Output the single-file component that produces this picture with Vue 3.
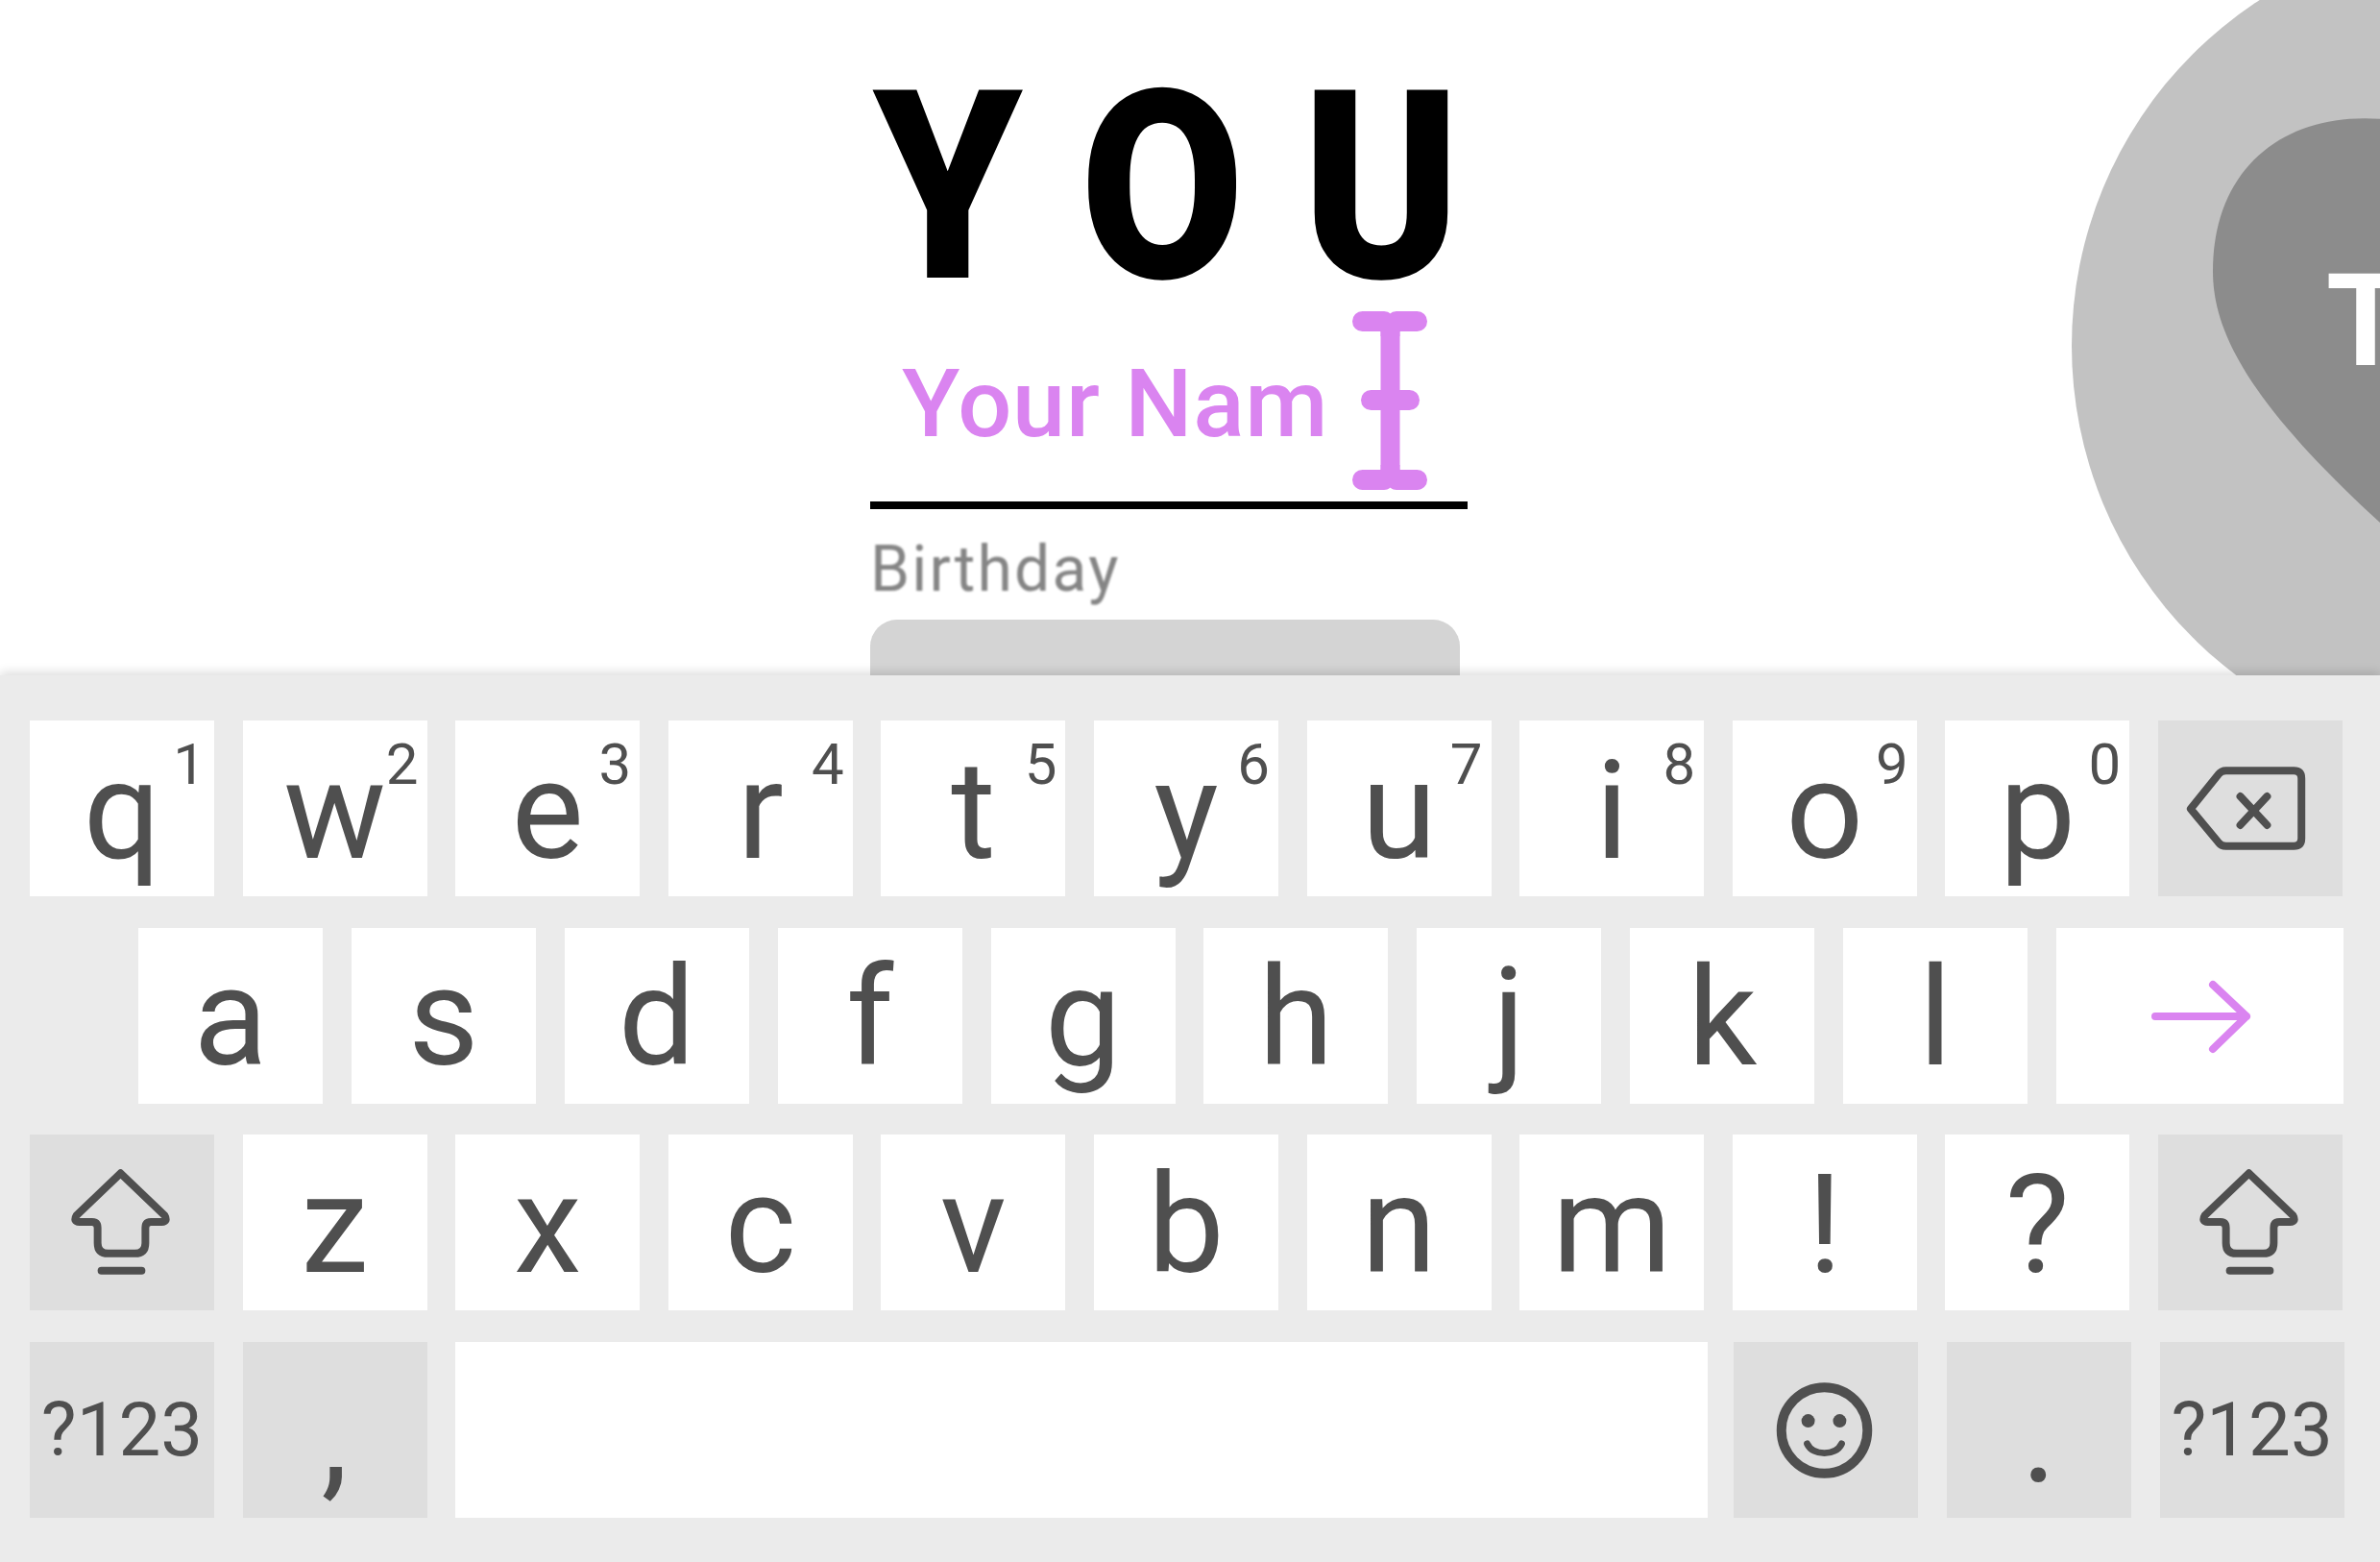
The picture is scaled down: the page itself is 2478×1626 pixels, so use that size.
<script setup>
const rowOne = [
  ['q', '1'], ['w', '2'], ['e', '3'], ['r', '4'], ['t', '5'],
  ['y', '6'], ['u', '7'], ['i', '8'], ['o', '9'], ['p', '0']
]
const rowTwo = ['a', 's', 'd', 'f', 'g', 'h', 'j', 'k', 'l']
const rowThree = ['z', 'x', 'c', 'v', 'b', 'n', 'm', '!', '?']
</script>

<template>
  <div class="screen">
    <section class="stage">
      <div class="badge">
        <svg class="badge-art" viewBox="2100 0 378 703" aria-hidden="true">
          <circle cx="2586" cy="360" r="429" fill="#c2c2c2" />
          <path d="M2490 125C2385 112 2304 170 2304 282C2304 345 2340 420 2490 555Z" fill="#8c8c8c" />
        </svg>
        <span class="badge-letter">T</span>
      </div>

      <div class="form">
        <h1 class="title">YOU</h1>
        <div class="name-row">
          <span class="name">Your Nam</span>
          <svg class="caret" viewBox="0 0 78 186" aria-hidden="true">
            <g stroke="#da84f0" stroke-linecap="round" fill="none">
              <path d="M39.500 14V172" stroke-width="20" stroke-linecap="butt" />
              <path d="M10.500 10.500H33M46 10.500H67.500" stroke-width="21" />
              <path d="M19.500 92.500H59.500" stroke-width="21" />
              <path d="M10.500 175.500H33M46 175.500H67.500" stroke-width="21" />
            </g>
            <path d="M29 20Q30 21 29.500 26H49.500Q49 21 50 20ZM29 166Q30 165 29.500 160H49.500Q49 165 50 166Z" fill="#da84f0" />
          </svg>
        </div>
        <div class="rule"></div>
        <div class="label">Birthday</div>
        <div class="date-box"></div>
      </div>
    </section>

    <section class="keyboard">
      <div class="row">
        <div v-for="k in rowOne" :key="k[0]" class="key">
          {{ k[0] }}<span class="hint">{{ k[1] }}</span>
        </div>
        <div class="key dark">
          <svg class="icon" viewBox="0 0 193 183" aria-hidden="true">
            <path
              d="M34 92L63 56Q66 52 71 52H142Q150 52 150 60V123Q150 131 142 131H71Q66 131 63 127Z"
              fill="none" stroke="#4f4f4f" stroke-width="8" stroke-linejoin="round"
            />
            <path d="M86 79L114 109M114 79L86 109" fill="none" stroke="#4f4f4f" stroke-width="8" stroke-linecap="round" />
          </svg>
        </div>
      </div>

      <div class="row row-two">
        <div v-for="k in rowTwo" :key="k" class="key">{{ k }}</div>
        <div class="key enter">
          <svg class="icon" viewBox="0 0 299 183" aria-hidden="true">
            <path
              d="M103 92H198M163 59L198 92L163 126"
              fill="none" stroke="#da84f0" stroke-width="8" stroke-linecap="round" stroke-linejoin="round"
            />
          </svg>
        </div>
      </div>

      <div class="row">
        <div class="key dark">
          <svg class="icon" viewBox="0 0 193 183" aria-hidden="true">
            <path
              d="M95 40L49 84Q45 91 52 91H65Q71 91 71 97V113Q71 124 82 124H110Q121 124 121 113V97Q121 91 127 91H138Q145 91 141 84Z"
              fill="none" stroke="#4f4f4f" stroke-width="8" stroke-linejoin="round"
            />
            <path d="M75 142H117" stroke="#4f4f4f" stroke-width="8" stroke-linecap="round" />
          </svg>
        </div>
        <div v-for="k in rowThree" :key="k" class="key">{{ k }}</div>
        <div class="key dark">
          <svg class="icon" viewBox="0 0 193 183" aria-hidden="true">
            <path
              d="M95 40L49 84Q45 91 52 91H65Q71 91 71 97V113Q71 124 82 124H110Q121 124 121 113V97Q121 91 127 91H138Q145 91 141 84Z"
              fill="none" stroke="#4f4f4f" stroke-width="8" stroke-linejoin="round"
            />
            <path d="M75 142H117" stroke="#4f4f4f" stroke-width="8" stroke-linecap="round" />
          </svg>
        </div>
      </div>

      <div class="row">
        <div class="key dark small">?123</div>
        <div class="key dark punct">,</div>
        <div class="key space"></div>
        <div class="key dark">
          <svg class="icon" viewBox="0 0 193 183" aria-hidden="true">
            <circle cx="95" cy="92" r="45" fill="none" stroke="#4f4f4f" stroke-width="10" />
            <circle cx="78" cy="82" r="7" fill="#4f4f4f" />
            <circle cx="111" cy="82" r="7" fill="#4f4f4f" />
            <path d="M77 106C83 119 107 119 113 106" fill="none" stroke="#4f4f4f" stroke-width="7" stroke-linecap="round" />
          </svg>
        </div>
        <div class="key dark punct">.</div>
        <div class="key dark small">?123</div>
      </div>
    </section>
  </div>
</template>

<style>
html, body {
  margin: 0;
  background: #fff;
}
</style>

<style scoped>
.screen {
  width: 2478px;
  height: 1626px;
  overflow: hidden;
  display: flex;
  flex-direction: column;
  background: #fff;
  font-family: Roboto, "Liberation Sans", sans-serif;
}

.stage {
  position: relative;
  height: 703px;
  overflow: hidden;
  flex: none;
  padding-left: 906px;
  box-sizing: border-box;
}

.badge {
  position: absolute;
  left: 2100px;
  top: 0;
  width: 378px;
  height: 703px;
  overflow: hidden;
}

.badge-art {
  display: block;
  width: 378px;
  height: 703px;
}

.badge-letter {
  position: absolute;
  left: 322px;
  top: 256px;
  font-size: 133px;
  line-height: 158px;
  font-weight: 700;
  color: #fff;
}

.form {
  width: 780px;
  padding-top: 66px;
}

.title {
  width: max-content;
  margin: 0 0 0 3px;
  font-size: 275px;
  line-height: 258px;
  font-weight: 900;
  font-kerning: none;
  letter-spacing: 67px;
  color: #000;
  white-space: nowrap;
  transform: scaleX(0.9);
  transform-origin: left center;
  filter: blur(0.7px);
}

.name-row {
  display: flex;
  align-items: flex-start;
  height: 186px;
  padding-left: 33px;
}

.name {
  width: 469px;
  flex: none;
  font-size: 99px;
  line-height: 186px;
  padding-top: 3px;
  letter-spacing: 0.800px;
  font-weight: 500;
  color: #da84f0;
  white-space: nowrap;
}

.caret {
  width: 78px;
  height: 186px;
  flex: none;
}

.rule {
  width: 622px;
  height: 8px;
  margin-top: 12px;
  background: #000;
}

.label {
  margin-top: 23px;
  font-size: 66px;
  line-height: 80px;
  letter-spacing: 2.200px;
  color: #858585;
  filter: blur(0.9px);
}

.date-box {
  width: 614px;
  height: 100px;
  margin-top: 12px;
  border-radius: 28px 28px 0 0;
  background: #d4d4d4;
}

.keyboard {
  position: relative;
  z-index: 1;
  flex: 1;
  box-sizing: border-box;
  padding: 47px 0 0 31px;
  display: flex;
  flex-direction: column;
  gap: 32.500px;
  background: #ebebeb;
  box-shadow: 0 -3px 10px rgba(0, 0, 0, 0.14);
}

.row {
  display: flex;
  gap: 29.600px;
}

.row-two {
  gap: 29.900px;
  padding-left: 113px;
}

.key {
  position: relative;
  flex: none;
  box-sizing: border-box;
  width: 192px;
  height: 183px;
  padding-top: 5px;
  display: flex;
  align-items: center;
  justify-content: center;
  background: #fff;
  color: #4f4f4f;
  font-size: 142px;
  line-height: 183px;
}

.dark {
  background: #dedede;
}

.enter {
  width: 299px;
}

.space {
  width: 1304px;
  margin-right: -2.400px;
}

.small {
  padding-top: 0;
  font-size: 78px;
}

.punct {
  padding-top: 10px;
}

.hint {
  position: absolute;
  top: 11px;
  right: 9px;
  font-size: 60px;
  line-height: 70px;
}

.icon {
  position: absolute;
  inset: 0;
  width: 100%;
  height: 100%;
}
</style>
